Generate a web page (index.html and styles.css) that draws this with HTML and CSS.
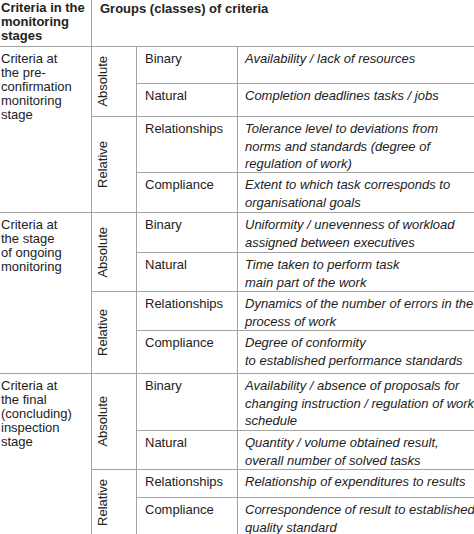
FILE: index.html
```html
<!DOCTYPE html>
<html lang="en">
<head>
<meta charset="utf-8">
<title>Criteria in the monitoring stages</title>
<link rel="stylesheet" href="styles.css">
</head>
<body>
<div class="table">
  <div class="cell head stage">Criteria in the<br>monitoring<br>stages</div>
  <div class="cell head groups">Groups (classes) of criteria</div>

  <div class="cell stage span4">Criteria at<br>the pre-<br>confirmation<br>monitoring<br>stage</div>
  <div class="cell kind"><span class="vert">Absolute</span></div>
  <div class="cell name">Binary</div>
  <div class="cell desc">Availability / lack of resources</div>
  <div class="cell name">Natural</div>
  <div class="cell desc">Completion deadlines tasks / jobs</div>
  <div class="cell kind"><span class="vert">Relative</span></div>
  <div class="cell name">Relationships</div>
  <div class="cell desc">Tolerance level to deviations from<br>norms and standards (degree of<br>regulation of work)</div>
  <div class="cell name">Compliance</div>
  <div class="cell desc">Extent to which task corresponds to<br>organisational goals</div>

  <div class="cell stage span4">Criteria at<br>the stage<br>of ongoing<br>monitoring</div>
  <div class="cell kind"><span class="vert">Absolute</span></div>
  <div class="cell name">Binary</div>
  <div class="cell desc">Uniformity / unevenness of workload<br>assigned between executives</div>
  <div class="cell name">Natural</div>
  <div class="cell desc">Time taken to perform task<br>main part of the work</div>
  <div class="cell kind"><span class="vert">Relative</span></div>
  <div class="cell name">Relationships</div>
  <div class="cell desc">Dynamics of the number of errors in the<br>process of work</div>
  <div class="cell name">Compliance</div>
  <div class="cell desc">Degree of conformity<br>to established performance standards</div>

  <div class="cell stage span4">Criteria at<br>the final<br>(concluding)<br>inspection<br>stage</div>
  <div class="cell kind"><span class="vert">Absolute</span></div>
  <div class="cell name">Binary</div>
  <div class="cell desc">Availability / absence of proposals for<br>changing instruction / regulation of work<br>schedule</div>
  <div class="cell name">Natural</div>
  <div class="cell desc">Quantity / volume obtained result,<br>overall number of solved tasks</div>
  <div class="cell kind"><span class="vert">Relative</span></div>
  <div class="cell name">Relationships</div>
  <div class="cell desc">Relationship of expenditures to results</div>
  <div class="cell name">Compliance</div>
  <div class="cell desc">Correspondence of result to established<br>quality standard</div>
</div>
</body>
</html>
```
FILE: styles.css
```css
html, body {
  margin: 0;
  padding: 0;
  background: #fff;
  overflow: hidden;
}
body {
  width: 474px;
  height: 534px;
  font-family: "Liberation Sans", Arial, sans-serif;
  font-size: 13px;
  color: #222;
}
.table {
  display: grid;
  width: 500px;
  grid-template-columns: 91px 44px 100px 262px;
  grid-template-rows: 46px 36px 32px 55px 39px 39px 38px 38px 42px 56px 38px 27px 36px;
  gap: 1px;
  background: #a3a3a3;
}
.cell {
  background: #fff;
  white-space: nowrap;
}
.head {
  font-weight: bold;
  line-height: 14px;
  padding-top: 1px;
}
.groups {
  grid-column: span 3;
  padding-left: 8px;
  line-height: 15px;
}
.stage {
  line-height: 14px;
  padding-left: 1px;
}
.span4 {
  grid-row: span 4;
  padding-top: 5px;
}
.kind {
  grid-row: span 2;
  display: flex;
  align-items: center;
  padding-left: 3px;
}
.vert {
  writing-mode: vertical-rl;
  transform: rotate(180deg);
  line-height: 15px;
}
.name {
  padding: 3px 0 0 8px;
  line-height: 17.5px;
}
.desc {
  padding: 3px 0 0 7px;
  line-height: 17.5px;
  font-style: italic;
}
```
